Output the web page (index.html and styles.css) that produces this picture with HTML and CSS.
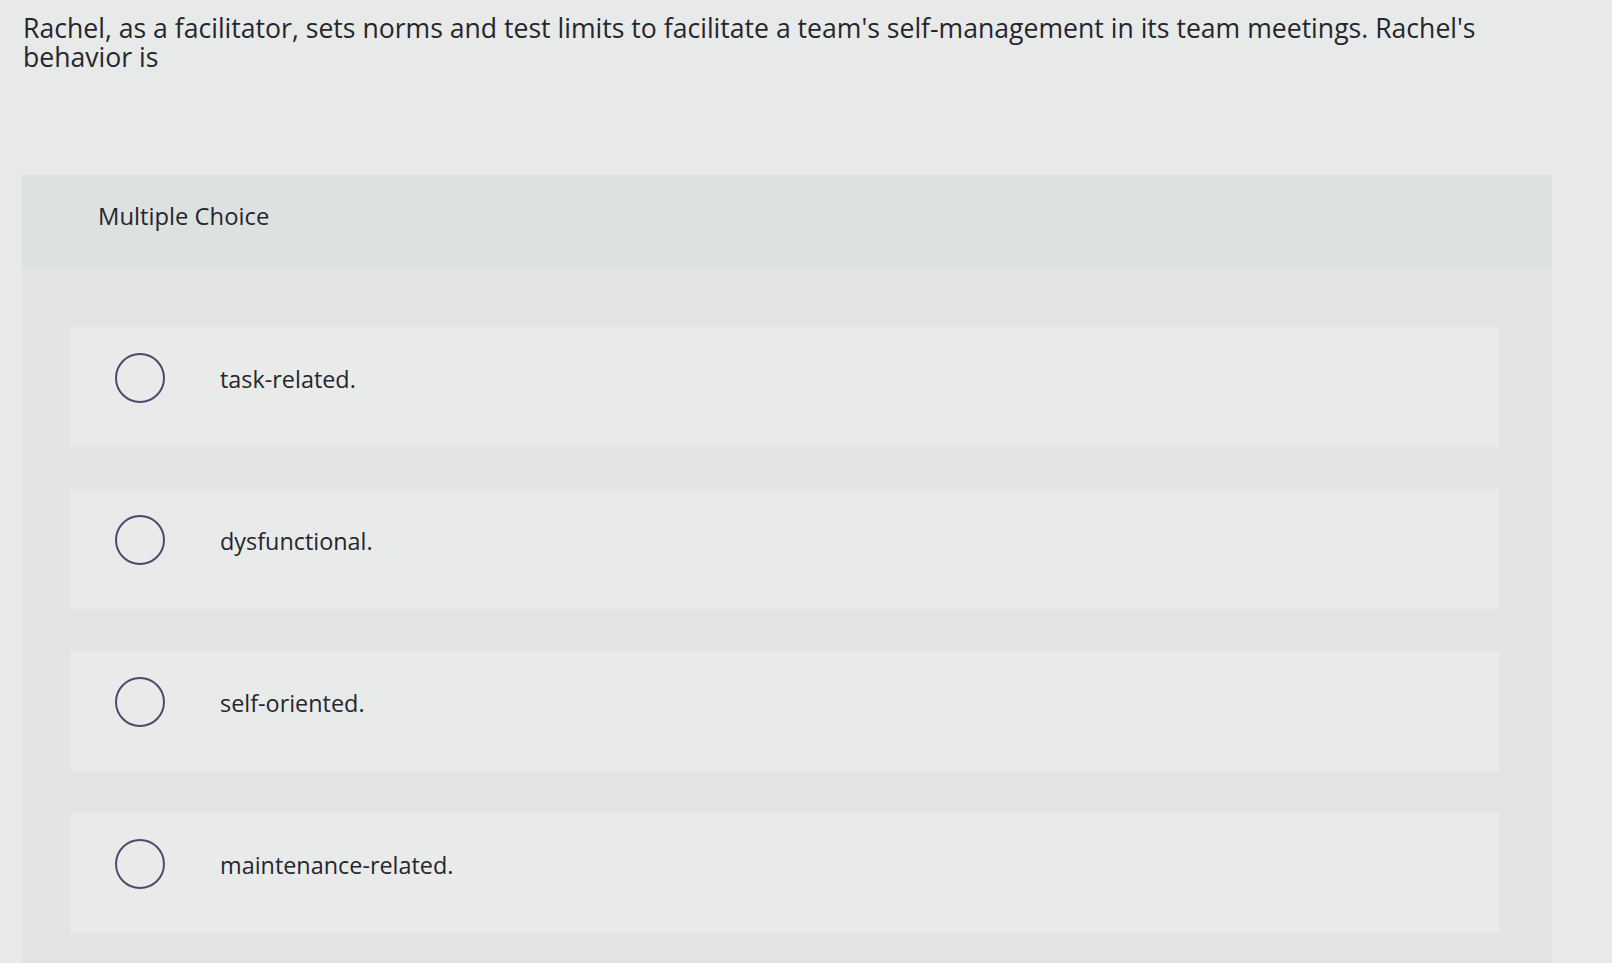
FILE: index.html
```html
<!DOCTYPE html>
<html>
<head>
<meta charset="utf-8">
<link rel="stylesheet" href="styles.css">
</head>
<body>
<p class="question">Rachel, as a facilitator, sets norms and test limits to facilitate a team's self-management in its team meetings. Rachel's behavior is</p>
<div class="panel">
  <div class="panel-header">Multiple Choice</div>
  <div class="options">
    <div class="option"><span class="radio"></span><span class="label">task-related.</span></div>
    <div class="option"><span class="radio"></span><span class="label">dysfunctional.</span></div>
    <div class="option"><span class="radio"></span><span class="label">self-oriented.</span></div>
    <div class="option"><span class="radio"></span><span class="label">maintenance-related.</span></div>
  </div>
</div>
</body>
</html>
```
FILE: styles.css
```css
html, body {
  margin: 0;
  padding: 0;
  background: #e8eae9;
  height: 100%;
  overflow: hidden;
}
body {
  font-family: "Open Sans", Lato, "Liberation Sans", sans-serif;
  color: #26262e;
}
.question {
  margin: 0;
  padding: 14px 70px 0 23px;
  font-size: 26.6px;
  line-height: 29px;
}
.panel {
  margin: 103px 60px 0 22px;
  background: #e2e5e4;
  height: 820px;
}
.panel-header {
  height: 94px;
  box-sizing: border-box;
  padding: 26px 0 0 76px;
  background: #dde1e0;
  font-size: 23.8px;
  line-height: 30px;
}
.options {
  display: flex;
  flex-direction: column;
  gap: 42px;
  padding: 58px 53px 0 48px;
}
.option {
  height: 120px;
  background: #e9ebea;
  display: flex;
  align-items: center;
  padding: 0 0 19px 45px;
  box-sizing: border-box;
}
.radio {
  width: 46px;
  height: 46px;
  border: 2px solid #4d4b6c;
  border-radius: 50%;
  flex: none;
}
.label {
  margin-left: 55px;
  margin-top: 3px;
  font-size: 23.4px;
  line-height: 30px;
}
```
